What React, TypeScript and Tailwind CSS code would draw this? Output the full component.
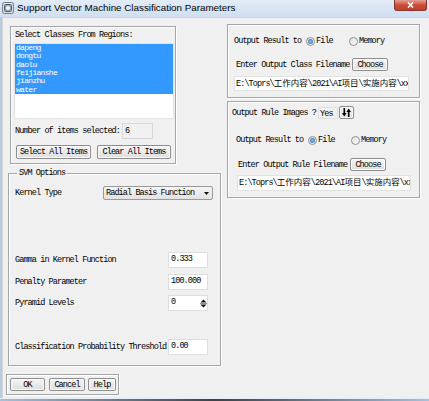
import type { ReactNode } from 'react';

const classes = ['dapeng', 'dongtu', 'daolu', 'feijianshe', 'jianzhu', 'water'];

function Group({ className, children }: { className: string; children?: ReactNode }) {
  return (
    <div className={`relative border border-[#a5a5a5] shadow-[inset_1px_1px_0_#ffffff,1px_1px_0_#ffffff] ${className}`}>
      {children}
    </div>
  );
}

function Btn({ className, children }: { className: string; children: ReactNode }) {
  return (
    <div className={`flex items-center justify-center rounded-[2px] border border-[#8d8d8d] bg-linear-to-b from-[#f6f6f6] to-[#dedede] shadow-[inset_0_0_0_1px_#fcfcfc] ${className}`}>
      {children}
    </div>
  );
}

function Radio({ checked }: { checked?: boolean }) {
  return (
    <div className="flex h-[9px] w-[9px] shrink-0 items-center justify-center rounded-full border border-[#8e8f8f] bg-linear-to-br from-[#e2e2e2] to-[#fbfbfb]">
      {checked && (
        <div className="h-[5px] w-[5px] rounded-full bg-radial from-[#8cc4f2] to-[#1c5fae]" />
      )}
    </div>
  );
}

function Field({ className, children }: { className: string; children?: ReactNode }) {
  return (
    <div className={`flex shrink-0 items-start border border-[#dedede] bg-white pl-[2px] pt-[1px] ${className}`}>
      {children}
    </div>
  );
}

function PathField({ className }: { className: string }) {
  return (
    <div className={`flex shrink-0 items-center overflow-hidden whitespace-nowrap border border-[#e2e2e2] bg-white pl-[1px] ${className}`}>
      <span>E:\Toprs\</span>
      <span className="tracking-normal">工作内容</span>
      <span>\2021\AI</span>
      <span className="tracking-normal">项目</span>
      <span>\</span>
      <span className="tracking-normal">实施内容</span>
      <span>\xx</span>
    </div>
  );
}

function Row({ className, children }: { className: string; children: ReactNode }) {
  return <div className={`flex shrink-0 items-center ${className}`}>{children}</div>;
}

export default function App() {
  return (
    <div className="flex h-[401px] w-[429px] flex-col overflow-hidden bg-[#f0f0f0]">
      {/* title bar */}
      <div className="flex h-[17px] shrink-0 items-start bg-linear-to-b from-[#e2ecf7] to-[#cfdef0]">
        <svg className="ml-[2px] mt-[2px] shrink-0" width="12" height="12" viewBox="0 0 12 12">
          <rect x="0.5" y="0.5" width="11" height="11" rx="2" fill="#dfe3e8" stroke="#6f7d8c" />
          <rect x="2.5" y="2.5" width="7" height="7" rx="1" fill="#9aa6b3" stroke="#55606c" />
          <circle cx="6" cy="6" r="2" fill="#f3f5f7" />
        </svg>
        <span className="ml-[3px] mt-[2px] font-['Liberation_Sans',Arial,sans-serif] text-[9.8px] leading-[12px] text-black">
          Support Vector Machine Classification Parameters
        </span>
        <div className="ml-auto mr-[2px] flex h-[11px] w-[33px] items-center justify-center rounded-b-[3px] border border-t-0 border-[#83362b] bg-linear-to-b from-[#e3a194] via-[#cc4b36] to-[#c2402e]">
          <svg width="7" height="6" viewBox="0 0 7 6">
            <path d="M1 0.5 L6 5.5 M6 0.5 L1 5.5" stroke="#ffffff" strokeWidth="1.6" />
          </svg>
        </div>
      </div>

      <div className="flex min-h-0 flex-1">
        <div className="w-[2px] shrink-0 bg-[#b7cbe2]" />
        {/* client area */}
        <div className="flex flex-1 flex-col border-l border-t border-[#d6d6d6] font-['Liberation_Mono','Noto_Sans_CJK_SC',monospace] text-[8.5px] leading-[10px] tracking-[-0.9px] text-black">
          <div className="flex items-start">
            {/* left column */}
            <div className="ml-[5px] flex flex-col pt-[8px]">
              <Group className="ml-[2px] flex h-[138px] w-[166px] flex-col">
                <div className="ml-[4px] mt-[3px] h-[10px]">Select Classes From Regions:</div>
                <div className="ml-[3px] mt-[3px] h-[76px] w-[160px] border border-[#e4e4e4] bg-white">
                  {classes.map((c) => (
                    <div key={c} className="flex h-[8.3px] items-center overflow-hidden bg-[#3399ff] pl-[1px] text-[8px] leading-[8px] tracking-[-0.7px] text-white">
                      {c}
                    </div>
                  ))}
                </div>
                <Row className="ml-[4px] mt-[4px]">
                  <span className="w-[107px]">Number of items selected:</span>
                  <div className="flex h-[16px] w-[31px] items-start border border-[#d8d8d8] bg-[#f0f0f0] pl-[2px] pt-[2px]">6</div>
                </Row>
                <Row className="ml-[5px] mt-[6px] gap-[6px]">
                  <Btn className="h-[14px] w-[75px]">Select All Items</Btn>
                  <Btn className="h-[14px] w-[74px]">Clear All Items</Btn>
                </Row>
              </Group>

              <Group className="mt-[9px] flex h-[193px] w-[213px] flex-col">
                <span className="absolute -top-[6px] left-[8px] bg-[#f0f0f0] px-[2px]">SVM Options</span>
                <Row className="mt-[12px] h-[14px]">
                  <span className="ml-[6px] w-[88px]">Kernel Type</span>
                  <div className="flex h-[14px] w-[110px] items-center justify-between rounded-[2px] border border-[#9a9a9a] bg-linear-to-b from-[#f5f5f5] to-[#e2e2e2] pl-[2px] pr-[3px]">
                    <span>Radial Basis Function</span>
                    <svg width="5" height="3" viewBox="0 0 5 3">
                      <path d="M0 0 L5 0 L2.5 3 Z" fill="#111" />
                    </svg>
                  </div>
                </Row>
                <Row className="mt-[52px] h-[16px]">
                  <span className="ml-[6px] w-[153px]">Gamma in Kernel Function</span>
                  <Field className="h-[16px] w-[40px]">0.333</Field>
                </Row>
                <Row className="mt-[6px] h-[16px]">
                  <span className="ml-[6px] w-[153px]">Penalty Parameter</span>
                  <Field className="h-[16px] w-[40px]">100.000</Field>
                </Row>
                <Row className="mt-[5px] h-[16px]">
                  <span className="ml-[6px] w-[153px]">Pyramid Levels</span>
                  <Field className="h-[16px] w-[40px] justify-between">
                    <span>0</span>
                    <svg className="mt-[2px]" width="7" height="9" viewBox="0 0 7 9">
                      <path d="M0.5 3.5 L3.5 0.5 L6.5 3.5 Z" fill="#111" />
                      <path d="M0 4.5 H7" stroke="#777" strokeWidth="0.8" />
                      <path d="M0.5 5.5 L3.5 8.5 L6.5 5.5 Z" fill="#111" />
                    </svg>
                  </Field>
                </Row>
                <Row className="mt-[28px] h-[16px]">
                  <span className="ml-[6px] w-[153px] whitespace-nowrap">Classification Probability Threshold</span>
                  <Field className="h-[16px] w-[40px]">0.00</Field>
                </Row>
              </Group>
            </div>

            {/* right column */}
            <div className="ml-[6px] flex flex-col gap-[3px] pt-[6px]">
              <Group className="flex h-[74px] w-[193px] flex-col">
                <Row className="mt-[11px] h-[10px]">
                  <span className="ml-[6px] w-[72px]">Output Result to</span>
                  <Radio checked />
                  <span className="ml-[1px] w-[33px]">File</span>
                  <Radio />
                  <span className="ml-[1px]">Memory</span>
                </Row>
                <Row className="mt-[12px] h-[13px]">
                  <span className="ml-[8px] w-[116px] whitespace-nowrap">Enter Output Class Filename</span>
                  <Btn className="h-[13px] w-[36px]">Choose</Btn>
                </Row>
                <PathField className="ml-[6px] mt-[5px] h-[15px] w-[175px]" />
              </Group>

              <Group className="flex h-[97px] w-[193px] flex-col">
                <Row className="mt-[4px] h-[13px]">
                  <span className="ml-[4px] w-[86px] whitespace-nowrap">Output Rule Images ?</span>
                  <div className="h-[12px] w-[20px] border border-[#e0e0e0] pl-[1px] pt-[1px]">Yes</div>
                  <Btn className="ml-[1px] h-[13px] w-[15px]">
                    <svg width="9" height="9" viewBox="0 0 9 9">
                      <path d="M2.3 0 V6" stroke="#000" strokeWidth="1.6" />
                      <path d="M0 5 L2.3 8.5 L4.6 5 Z" fill="#000" />
                      <path d="M6.7 9 V3" stroke="#000" strokeWidth="1.6" />
                      <path d="M4.4 4 L6.7 0.5 L9 4 Z" fill="#000" />
                    </svg>
                  </Btn>
                </Row>
                <Row className="mt-[16px] h-[10px]">
                  <span className="ml-[8px] w-[72px]">Output Result to</span>
                  <Radio checked />
                  <span className="ml-[1px] w-[33px]">File</span>
                  <Radio />
                  <span className="ml-[1px]">Memory</span>
                </Row>
                <Row className="mt-[13px] h-[13px]">
                  <span className="ml-[10px] w-[112px] whitespace-nowrap">Enter Output Rule Filename</span>
                  <Btn className="h-[13px] w-[36px]">Choose</Btn>
                </Row>
                <PathField className="ml-[9px] mt-[4px] h-[16px] w-[174px]" />
              </Group>
            </div>
          </div>

          {/* bottom buttons */}
          <Group className="ml-[3px] mt-[8px] flex h-[21px] w-[113px] items-start pl-[3px] pt-[3px]">
            <Btn className="h-[13px] w-[35px]">OK</Btn>
            <Btn className="ml-[4px] h-[13px] w-[36px]">Cancel</Btn>
            <Btn className="ml-[3px] h-[13px] w-[28px]">Help</Btn>
          </Group>
        </div>
      </div>

      <div className="h-[3px] shrink-0 border-t border-[#e6edf5] bg-linear-to-r from-[#a9c1dc] via-[#3d4248] to-[#a9c1dc]" />
    </div>
  );
}
